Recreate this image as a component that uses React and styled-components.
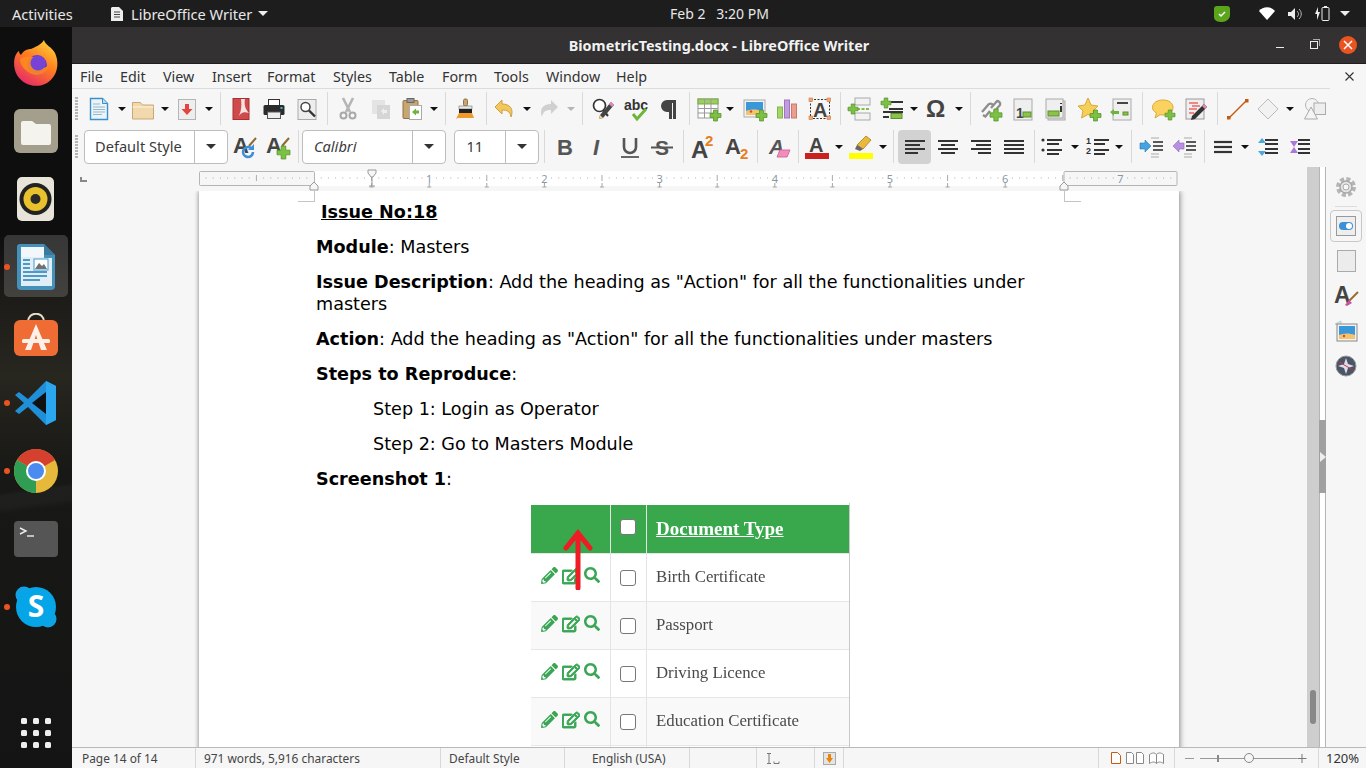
import React from "react";
import styled, { createGlobalStyle } from "styled-components";
import { FaPencilAlt, FaRegEdit, FaSearch } from "react-icons/fa";

const UI = `"Noto Sans", "Open Sans", sans-serif`;

const Global = createGlobalStyle`
  html, body { margin: 0; padding: 0; background: #111; overflow: hidden; }
  * { box-sizing: border-box; }
`;

const Screen = styled.div`
  width: 1366px;
  height: 768px;
  display: flex;
  flex-direction: column;
  overflow: hidden;
  font-family: ${UI};
`;

/* gnome top bar */
const TopBar = styled.div`
  height: 27px;
  background: #1d1d1d;
  color: #e8e8e8;
  font-size: 14.6px;
  display: flex;
  align-items: center;
  position: relative;
`;
const Activities = styled.span`
  margin-left: 12px;
  width: 99px;
`;
const AppMenu = styled.span`
  display: flex;
  align-items: center;
  gap: 8px;
`;
const Caret = styled.span`
  width: 0;
  height: 0;
  border-left: 5px solid transparent;
  border-right: 5px solid transparent;
  border-top: 5px solid #eee;
  margin-left: ${(p) => p.$ml || 0}px;
`;
const Clock = styled.span`
  position: absolute;
  left: 670px;
  font-size: 14px;
  white-space: pre;
`;
const Tray = styled.div`
  margin-left: auto;
  margin-right: 16px;
  display: flex;
  align-items: center;
  gap: 13px;
`;

const Main = styled.div`
  flex: 1;
  display: flex;
  min-height: 0;
`;

/* launcher */
const Dock = styled.div`
  width: 72px;
  padding-top: 2px;
  display: flex;
  flex-direction: column;
  background:
    linear-gradient(172deg, transparent 0 62%, rgba(255, 255, 255, 0.03) 62.5% 64%, transparent 65%),
    linear-gradient(180deg, #0e0e0e 0 28%, #1c1b18 36%, #27261f 47%, #181816 60%, #141414 100%);
`;
const DockCell = styled.div`
  height: 68px;
  display: flex;
  align-items: center;
  justify-content: center;
  position: relative;
`;
const DockHighlight = styled.div`
  position: absolute;
  left: 4px;
  top: 2px;
  width: 64px;
  height: 62px;
  border-radius: 5px;
  background: rgba(255, 255, 255, 0.17);
`;
const RunDot = styled.span`
  position: absolute;
  left: 4px;
  top: 31px;
  width: 6px;
  height: 6px;
  border-radius: 50%;
  background: #e95420;
`;
const AppsGrid = styled.div`
  margin-top: auto;
  margin-bottom: 4px;
  height: 62px;
  display: grid;
  grid-template-columns: repeat(3, 6px);
  grid-auto-rows: 6px;
  gap: 6px;
  justify-content: center;
  align-content: center;
  span {
    background: #eee;
    border-radius: 1.5px;
  }
`;

/* libreoffice window */
const Win = styled.div`
  flex: 1;
  min-width: 0;
  display: flex;
  flex-direction: column;
  background: #f6f6f6;
`;
const TitleBar = styled.div`
  height: 37px;
  background: #333132;
  border-bottom: 1px solid #1f1f1f;
  color: #f2f2f2;
  font-weight: 700;
  font-size: 14.4px;
  display: flex;
  align-items: center;
  justify-content: center;
  position: relative;
`;
const WinButtons = styled.div`
  position: absolute;
  right: 9px;
  top: 9px;
  display: flex;
  align-items: center;
`;
const MinBtn = styled.span`
  width: 8px;
  height: 1px;
  margin-top: 4px;
  margin-right: 26px;
  background: #eee;
`;
const RestoreBtn = styled.span`
  width: 8px;
  height: 8px;
  border: 1px solid #eee;
  margin-right: 21px;
  position: relative;
  &::after {
    content: "";
    position: absolute;
    right: -3px;
    top: -3px;
    width: 6px;
    height: 6px;
    border-top: 1px solid #aaa;
    border-right: 1px solid #aaa;
  }
`;
const CloseBtn = styled.span`
  width: 18px;
  height: 18px;
  border-radius: 50%;
  background: #e95420;
  display: flex;
  align-items: center;
  justify-content: center;
`;

const MenuBar = styled.div`
  height: 25px;
  padding: 0 0 1px 8px;
  display: flex;
  align-items: center;
  font-size: 14.3px;
  color: #333;
  position: relative;
  &::after {
    content: "";
    position: absolute;
    left: 0;
    bottom: 0;
    width: 1258px;
    height: 1px;
    background: #dcdcdc;
  }
`;
const MenuItem = styled.span`
  width: ${(p) => p.$w}px;
  flex: none;
`;
const MenuClose = styled.span`
  margin-left: auto;
  margin-right: 12px;
  display: flex;
`;

const ToolRow = styled.div`
  height: 39px;
  display: flex;
  align-items: center;
  padding-bottom: ${(p) => p.$pb || 0}px;
`;
const Slot = styled.div`
  flex: none;
  display: flex;
  align-items: center;
  justify-content: center;
  width: ${(p) => p.$w}px;
  margin-left: ${(p) => p.$gap}px;
`;
const Grip = styled.div`
  width: 3px;
  height: 23px;
  background: repeating-linear-gradient(180deg, #b4b4b4 0 2px, transparent 2px 3px);
`;
const ToolSep = styled.div`
  width: 1px;
  height: 33px;
  background: #d9d9d9;
`;
const DropArrow = styled.span`
  width: 0;
  height: 0;
  border-left: 4px solid transparent;
  border-right: 4px solid transparent;
  border-top: 4px solid ${(p) => (p.$off ? "#b5b5b5" : "#111")};
`;
const Combo = styled.div`
  width: 100%;
  height: 34px;
  background: #fff;
  border: 1px solid #bdbdbd;
  border-radius: 4px;
  display: flex;
  font-size: 14.6px;
  color: #3a3a3a;
`;
const ComboText = styled.span`
  flex: 1;
  display: flex;
  align-items: center;
  padding-left: ${(p) => p.$pl || 10}px;
  padding-bottom: 2px;
  font-style: ${(p) => (p.$italic ? "italic" : "normal")};
  white-space: nowrap;
`;
const ComboArrow = styled.span`
  width: ${(p) => p.$w || 33}px;
  border-left: 1px solid #bdbdbd;
  display: flex;
  align-items: center;
  justify-content: center;
  &::before {
    content: "";
    border-left: 5px solid transparent;
    border-right: 5px solid transparent;
    border-top: 5px solid #333;
  }
`;
const ActiveTool = styled.div`
  width: 33px;
  height: 34px;
  background: #d2d2d2;
  border-radius: 4px;
  display: flex;
  align-items: center;
  justify-content: center;
`;

/* edit area */
const ContentRow = styled.div`
  flex: 1;
  min-height: 0;
  display: flex;
`;
const EditColumn = styled.div`
  width: 1235px;
  flex: none;
  display: flex;
  flex-direction: column;
  min-height: 0;
`;
const RulerRow = styled.div`
  height: 24px;
  flex: none;
  padding-left: 8px;
  display: flex;
  align-items: flex-start;
`;
const TabCorner = styled.span`
  width: 7px;
  height: 5px;
  margin-top: 10px;
  margin-right: 112px;
  border-left: 2px solid #888;
  border-bottom: 2px solid #888;
`;
const DocArea = styled.div`
  flex: 1;
  min-height: 0;
  overflow: hidden;
  padding-left: 127px;
`;
const Page = styled.div`
  width: 980px;
  height: 600px;
  background: #fff;
  box-shadow: -1px 0 4px rgba(0, 0, 0, 0.28), 2px 0 5px rgba(0, 0, 0, 0.28);
  padding: 10px 0 0 117px;
  position: relative;
  color: #000;
  font-family: "DejaVu Sans", sans-serif;
  font-size: 17.6px;
  line-height: 22px;
`;
const CropMark = styled.span`
  position: absolute;
  top: 0;
  width: 17px;
  height: 11px;
  border-bottom: 1px solid #c4c4c4;
  ${(p) => (p.$side === "left" ? "left: 99px; border-right: 1px solid #c4c4c4;" : "left: 865px; border-left: 1px solid #c4c4c4;")}
`;
const Para = styled.p`
  margin: 0 0 13px ${(p) => p.$indent || 0}px;
  width: 730px;
`;
const IssueTitle = styled.p`
  margin: 0 0 13px 5px;
  font-weight: 700;
  text-decoration: underline;
`;

/* pasted screenshot */
const Shot = styled.div`
  margin: 2px 0 0 214px;
  width: 320px;
  position: relative;
  padding: 2px 0 0 1px;
  border-right: 1px solid #c9c9c9;
  font-family: "Liberation Serif", serif;
  filter: blur(0.3px);
`;
const ShotRow = styled.div`
  display: grid;
  grid-template-columns: 79px 36px 1fr;
  height: ${(p) => (p.$head ? 49 : 48)}px;
  background: ${(p) => (p.$head ? "#39a84c" : p.$alt ? "#f9f9f9" : "#fff")};
  border-bottom: 1px solid ${(p) => (p.$head ? "#e4e4e4" : "#e6e6e6")};
`;
const ShotCell = styled.div`
  display: flex;
  align-items: center;
  padding-left: ${(p) => p.$pl || 0}px;
  padding-right: ${(p) => (p.$center ? 2 : 0)}px;
  justify-content: ${(p) => (p.$center ? "center" : "flex-start")};
  border-left: ${(p) => (p.$first ? "0" : "1.5px solid #e4e4e4")};
  color: #3aa655;
`;
const DocType = styled.span`
  color: #4a4a4a;
  font-size: 16.8px;
  margin-top: -1px;
`;
const DocHead = styled.span`
  color: #fff;
  font-size: 19px;
  font-weight: 700;
  text-decoration: underline;
`;
const ShotCheck = styled.span`
  width: 16px;
  height: 16px;
  border: 1.5px solid #777;
  border-radius: 3px;
  background: #fff;
  margin-top: ${(p) => p.$mt || 0}px;
`;
const ActionIcons = styled.span`
  display: flex;
  gap: 4px;
  margin: -4px 0 0 10px;
`;
const RedArrow = styled.svg`
  position: absolute;
  left: 33px;
  top: 25px;
`;

/* scrollbar + sidebar */
const ScrollTrack = styled.div`
  width: 12px;
  flex: none;
  background: #cecece;
  padding: 523px 3px 0;
`;
const ScrollThumb = styled.div`
  height: 34px;
  border-radius: 3px;
  background: #888;
`;
const SideHandle = styled.div`
  width: 7px;
  flex: none;
  background: #fff;
  border-left: 1px solid #b5b5b5;
  border-right: 1px solid #b5b5b5;
  padding-top: 253px;
`;
const HandleGrip = styled.div`
  height: 73px;
  margin: 0 -1px;
  background: #a0a0a0;
  display: flex;
  align-items: center;
  &::before {
    content: "";
    border-left: 6px solid #eee;
    border-top: 5px solid transparent;
    border-bottom: 5px solid transparent;
    margin-left: 1px;
  }
`;
const SideBar = styled.div`
  flex: 1;
  display: flex;
  flex-direction: column;
  align-items: center;
  padding-top: 8px;
`;
const SideBtn = styled.div`
  width: 32px;
  height: ${(p) => (p.$active ? 32 : 35)}px;
  margin-bottom: ${(p) => (p.$active ? 1 : 0)}px;
  flex: none;
  display: flex;
  align-items: center;
  justify-content: center;
  border: 1px solid ${(p) => (p.$active ? "#c8c8c8" : "transparent")};
  border-radius: 4px;
`;
const SideRule = styled.div`
  width: 22px;
  height: 1px;
  margin-top: 7px;
  margin-bottom: 3px;
  background: #dcdcdc;
`;

/* status bar */
const StatusBar = styled.div`
  height: 21px;
  flex: none;
  border-top: 1px solid #b9b9b9;
  display: flex;
  align-items: center;
  font-size: 11.9px;
  color: #444;
`;
const StatusCell = styled.div`
  flex: none;
  width: ${(p) => p.$w}px;
  height: 100%;
  padding-left: ${(p) => p.$pl || 0}px;
  border-right: ${(p) => (p.$sep ? "1px solid #d8d8d8" : "0")};
  display: flex;
  align-items: center;
  gap: ${(p) => p.$gap || 0}px;
  white-space: nowrap;
`;
const ZoomPercent = styled.span`
  font-size: 13px;
  color: #333;
`;

const Svg = ({ s = 24, children }) => (
  <svg width={s} height={s} viewBox={`0 0 ${s} ${s}`} overflow="visible">
    {children}
  </svg>
);

const Plus = ({ x = 14, y = 14, s = 10, fill = "#7cc142" }) => (
  <path
    d={`M${x + s * 0.32} ${y}h${s * 0.36}v${s * 0.32}h${s * 0.32}v${s * 0.36}h${-s * 0.32}v${s * 0.32}h${-s * 0.36}v${-s * 0.32}h${-s * 0.32}v${-s * 0.36}h${s * 0.32}z`}
    fill={fill}
    stroke="#4f8f25"
    strokeWidth=".7"
  />
);
const Lbl = ({ x, y, size = 20, fill = "#444", style = "normal", weight = 700, family = "Liberation Sans", children }) => (
  <text x={x} y={y} fontSize={size} fill={fill} fontWeight={weight} fontStyle={style} fontFamily={family}>
    {children}
  </text>
);
const Lines = ({ rows, stroke = "#333", sw = 2 }) => (
  <g stroke={stroke} strokeWidth={sw}>
    {rows.map(([x1, x2, y], i) => (
      <line key={i} x1={x1} x2={x2} y1={y} y2={y} />
    ))}
  </g>
);
const Brush = () => <path d="M23 3l-7 8" stroke="#8f6a35" strokeWidth="2" />;

const Ic = {
  New: () => (
    <Svg>
      <path d="M3.5 1.5h12l5 5v16h-17z" fill="#eaf4fb" stroke="#3d8fcb" strokeWidth="1.4" />
      <path d="M15.5 1.5v5h5" fill="#bcdcf2" stroke="#3d8fcb" />
      <Lines rows={[[6, 13, 7], [6, 18, 10], [6, 18, 12.5], [6, 18, 15], [6, 15, 17.5]]} stroke="#9db5c6" sw={1} />
    </Svg>
  ),
  Open: () => (
    <Svg>
      <path d="M1.5 5.5h8l2 2.5h11v14h-21z" fill="#f2d9ad" stroke="#c9a875" />
      <path d="M1.5 10h21" stroke="#fff2da" />
    </Svg>
  ),
  Save: () => (
    <Svg>
      <rect x="3.5" y="2.5" width="17" height="20" fill="#eee" stroke="#b5b5b5" />
      <path d="M10 7h4v5h3.5l-5.500 6-5.500-6H10z" fill="#e2443f" />
    </Svg>
  ),
  Pdf: () => (
    <Svg>
      <rect x="4" y="1.5" width="16" height="21" fill="#cf4a4c" stroke="#a83032" />
      <path d="M8 22c4-6 5-12 4-20h4c-1 5 0 10 4 14-6-2-9 0-12 6z" fill="#f7e3e0" />
    </Svg>
  ),
  Print: () => (
    <Svg>
      <rect x="6.5" y="2.5" width="11" height="7" fill="#fff" stroke="#333" />
      <rect x="1.5" y="8" width="21" height="10" rx="1.5" fill="#2c2c2c" />
      <rect x="18.5" y="10" width="2" height="2" fill="#3ab5e6" />
      <rect x="5.5" y="15" width="13" height="6.5" fill="#eee" stroke="#555" />
    </Svg>
  ),
  Preview: () => (
    <Svg>
      <rect x="3" y="2.5" width="18" height="20" fill="#eee" stroke="#aaa" />
      <circle cx="10.5" cy="10" r="4.5" fill="#fff" stroke="#444" strokeWidth="1.5" />
      <path d="M14 13.5l6 6" stroke="#333" strokeWidth="2.4" />
    </Svg>
  ),
  Cut: () => (
    <Svg>
      <path d="M7 1l7 14M17 1L10 15" stroke="#b5b5b5" strokeWidth="2.6" />
      <circle cx="7.5" cy="18.5" r="3" fill="none" stroke="#a8a8a8" strokeWidth="2" />
      <circle cx="16.5" cy="18.5" r="3" fill="none" stroke="#a8a8a8" strokeWidth="2" />
    </Svg>
  ),
  Copy: () => (
    <Svg>
      <rect x="3" y="3" width="13" height="14" fill="#e4e4e4" />
      <rect x="8" y="8" width="13" height="14" fill="#d6d6d6" />
      <path d="M12 14l3-3v2h3v3h-3v2z" fill="#eee" />
    </Svg>
  ),
  Paste: () => (
    <Svg>
      <rect x="3" y="3.5" width="15" height="18" rx="1" fill="#c9a56f" stroke="#8f7344" />
      <rect x="7" y="1.5" width="7" height="4" fill="#999" stroke="#666" />
      <rect x="9.5" y="8.5" width="12" height="14" fill="#fff" stroke="#aaa" />
      <path d="M12 15l4-3.5v2h3v3h-3v2z" fill="#6cb33f" />
    </Svg>
  ),
  Clone: () => (
    <Svg>
      <rect x="9.5" y="2" width="4" height="7" rx="1.5" fill="#c9a56f" stroke="#8f7344" />
      <rect x="5" y="9" width="13" height="3" fill="#e7e7e7" stroke="#777" strokeWidth=".6" />
      <rect x="5" y="12" width="13" height="4" fill="#222" />
      <path d="M5 16h13l2 5H4l-2 1z" fill="#ef9a2b" />
    </Svg>
  ),
  Undo: () => (
    <Svg>
      <path d="M9 3L2 10l7 7v-4c5 0 8 1 9 7 3-8-1-13-9-13z" fill="#f2c75c" stroke="#cfa03e" />
    </Svg>
  ),
  Redo: () => (
    <Svg>
      <path d="M15 3l7 7-7 7v-4c-5 0-8 1-9 7-3-8 1-13 9-13z" fill="#d0d0d0" />
    </Svg>
  ),
  Find: () => (
    <Svg>
      <circle cx="8.5" cy="8.5" r="6" fill="#fff" stroke="#333" strokeWidth="1.7" />
      <path d="M12 13l5 6" stroke="#333" strokeWidth="2" />
      <path d="M20 5l3 3-11 13-4 1 1-4z" fill="#444" />
      <path d="M20 5l3 3-2 2-3-3z" fill="#e58ab8" />
      <path d="M9 18l3 3-4 1z" fill="#f3d38c" />
    </Svg>
  ),
  Spell: () => (
    <Svg>
      <Lbl x={0} y={13} size={14} fill="#333">abc</Lbl>
      <path d="M9 17l4 5 9-10" fill="none" stroke="#6fb536" strokeWidth="3" />
    </Svg>
  ),
  Para: () => (
    <Svg>
      <path d="M19 3H10a6 6 0 0 0 0 12h2v7h3V6h1v16h3z" fill="#444" />
    </Svg>
  ),
  Table: () => (
    <Svg>
      <rect x="1" y="2" width="20" height="19" fill="#fff" stroke="#999" />
      <rect x="1" y="2" width="20" height="5" fill="#9ccc65" stroke="#7ba847" />
      <path d="M7.5 2v19M14 2v19M1 11.5h20M1 16h20" stroke="#999" />
      <Plus x={13} y={13} s={11} />
    </Svg>
  ),
  Image: () => (
    <Svg>
      <rect x="1" y="3" width="21" height="17" fill="#f2f2f2" stroke="#aaa" />
      <rect x="3" y="5" width="17" height="13" fill="#3b98d8" />
      <path d="M3 18v-4c5-2 10-2 17 0v4z" fill="#f4c36b" />
      <circle cx="8" cy="14.5" r="1.2" fill="#d9482b" />
      <Plus x={13} y={13} s={11} />
    </Svg>
  ),
  Chart: () => (
    <Svg>
      <rect x="2.5" y="10" width="5" height="11" fill="#a6d66a" stroke="#84b24b" />
      <rect x="9.5" y="3" width="5" height="18" fill="#c29be0" stroke="#9c77bd" />
      <rect x="16.5" y="7" width="5" height="14" fill="#ec9d8d" stroke="#c67b6c" />
    </Svg>
  ),
  TextBox: () => (
    <Svg>
      <rect x="2.5" y="2.5" width="19" height="19" fill="none" stroke="#333" strokeDasharray="2 1.5" />
      <Lbl x={5} y={20} size={20} fill="#444">A</Lbl>
      {[[1, 1], [19, 1], [1, 19], [19, 19]].map(([x, y]) => (
        <rect key={x + "" + y} x={x} y={y} width="3.6" height="3.6" fill="#f0a878" stroke="#c97741" strokeWidth=".6" />
      ))}
    </Svg>
  ),
  PageBreak: () => (
    <Svg>
      <rect x="7" y="1" width="15" height="7" fill="#f2f2f2" stroke="#aaa" />
      <rect x="7" y="16" width="15" height="7" fill="#f2f2f2" stroke="#aaa" />
      <path d="M9 12h13" stroke="#7cc142" strokeWidth="2" strokeDasharray="3 1.5" />
      <Plus x={0} y={7} s={10} />
    </Svg>
  ),
  Field: () => (
    <Svg>
      <Lines rows={[[8, 22, 5], [8, 22, 12], [2, 22, 15], [2, 8, 20]]} sw={2} />
      <Plus x={0} y={1} s={10} />
      <rect x="10" y="16.5" width="11" height="5" fill="#8bc34a" stroke="#5d8f2c" />
    </Svg>
  ),
  Omega: () => (
    <Svg>
      <Lbl x={1} y={20} size={24} fill="#444">Ω</Lbl>
    </Svg>
  ),
  Link: () => (
    <Svg>
      <path d="M4 15l6-7a3 3 0 0 1 5 0M8 20l-3-2M12 14l-5 6M13 11l6-7a3 3 0 0 1 3 4l-6 7" fill="none" stroke="#8d8d8d" strokeWidth="2.3" />
      <Plus x={12} y={12} s={12} />
    </Svg>
  ),
  Footnote: () => (
    <Svg>
      <rect x="3" y="2" width="18" height="21" fill="#efefef" stroke="#aaa" />
      <Lbl x={5} y={21} size={14} fill="#444">1</Lbl>
      <rect x="12" y="15" width="8" height="5" fill="#8bc34a" stroke="#5d8f2c" />
    </Svg>
  ),
  Endnote: () => (
    <Svg>
      <rect x="5" y="4" width="17" height="19" fill="#ddd" stroke="#aaa" />
      <rect x="3" y="2" width="17" height="19" fill="#efefef" stroke="#aaa" />
      <path d="M18 6v1M18 9v6" stroke="#333" strokeWidth="2" />
      <rect x="5" y="14" width="11" height="5" fill="#8bc34a" stroke="#5d8f2c" />
    </Svg>
  ),
  Star: () => (
    <Svg>
      <path d="M11 1l3 7 7 1-5 5 1.500 7-6.500-3.500L4.500 21 6 14 1 9l7-1z" fill="#f6cf57" stroke="#d9a93a" />
      <Plus x={13} y={13} s={11} />
    </Svg>
  ),
  XRef: () => (
    <Svg>
      <rect x="4" y="2" width="18" height="21" fill="#efefef" stroke="#aaa" />
      <path d="M8 6h11" stroke="#444" strokeWidth="2" />
      <path d="M1 15l4-3v2h5v3H5v2z" fill="#6cb33f" />
      <rect x="14" y="15" width="5" height="3" fill="#8bc34a" stroke="#5d8f2c" />
    </Svg>
  ),
  Comment: () => (
    <Svg>
      <path d="M12 3c6 0 10 3 10 7.500S18 18 12 18c-1 0-2 0-3-.3L4 21l1.500-5C3 14.500 1.500 13 1.500 10.500 1.500 6 6 3 12 3z" fill="#fbd25f" stroke="#d9a93a" />
      <Plus x={14} y={13} s={10} />
    </Svg>
  ),
  Track: () => (
    <Svg>
      <rect x="2" y="2" width="18" height="20" fill="#eee" stroke="#999" />
      <Lines rows={[[5, 14, 6], [8, 16, 9], [5, 13, 12], [5, 10, 16]]} stroke="#e22" sw={1} />
      <path d="M20 7l3 3-12 12-4 1 1-4z" fill="#333" />
      <path d="M20 7l3 3-2 2-3-3z" fill="#e58ab8" />
    </Svg>
  ),
  Line: () => (
    <Svg>
      <path d="M3 21L20 4" stroke="#c55a11" strokeWidth="1.4" />
      <rect x="1" y="19" width="3.5" height="3.5" fill="#c55a11" />
      <rect x="19" y="2" width="3.5" height="3.5" fill="#c55a11" />
    </Svg>
  ),
  Diamond: () => (
    <Svg>
      <path d="M12 2l10 10-10 10L2 12z" fill="#f2f2f2" stroke="#bbb" />
    </Svg>
  ),
  Shapes: () => (
    <Svg>
      <circle cx="9" cy="8" r="6.5" fill="#f4f4f4" stroke="#b5b5b5" />
      <rect x="11" y="6" width="11.5" height="11.5" fill="#eee" stroke="#aaa" />
      <path d="M8 10l6.500 12H1.500z" fill="#f4f4f4" stroke="#aaa" />
    </Svg>
  ),
  AUpdate: () => (
    <Svg>
      <Lbl x={0} y={18} size={22} fill="#444">A</Lbl>
      <Brush />
      <path d="M20 17a5 5 0 1 1-2-4" fill="none" stroke="#3d8fd8" strokeWidth="2.6" />
      <path d="M21 9v6h-6z" fill="#3d8fd8" />
    </Svg>
  ),
  ANew: () => (
    <Svg>
      <Lbl x={0} y={18} size={22} fill="#444">A</Lbl>
      <Brush />
      <Plus x={11} y={11} s={13} />
    </Svg>
  ),
  Bold: () => <Svg><Lbl x={5} y={20} size={22} fill="#555">B</Lbl></Svg>,
  Italic: () => <Svg><Lbl x={8} y={20} size={22} fill="#555" style="italic">I</Lbl></Svg>,
  Under: () => (
    <Svg>
      <path d="M6 3v9a6 6 0 0 0 12 0V3" fill="none" stroke="#555" strokeWidth="2.6" />
      <path d="M3 22h18" stroke="#666" strokeWidth="2" />
    </Svg>
  ),
  Strike: () => (
    <Svg>
      <Lbl x={5} y={20} size={21} fill="#555">S</Lbl>
      <path d="M1 12.5h22" stroke="#555" strokeWidth="2" />
    </Svg>
  ),
  Sup: () => (
    <Svg>
      <Lbl x={0} y={23} size={24} fill="#444">A</Lbl>
      <Lbl x={14} y={11} size={15} fill="#e67e22">2</Lbl>
    </Svg>
  ),
  Sub: () => (
    <Svg>
      <Lbl x={0} y={19} size={22} fill="#444">A</Lbl>
      <Lbl x={15} y={24} size={15} fill="#e67e22">2</Lbl>
    </Svg>
  ),
  Clear: () => (
    <Svg>
      <Lbl x={2} y={19} size={21} fill="#555" style="italic">A</Lbl>
      <path d="M13 15h10l-3 7H10z" fill="#f28dbb" stroke="#d26c9a" />
    </Svg>
  ),
  Color: () => (
    <Svg>
      <Lbl x={4} y={17} size={20} fill="#444">A</Lbl>
      <rect x="0" y="18" width="24" height="6" fill="#c9211e" />
    </Svg>
  ),
  Mark: () => (
    <Svg>
      <path d="M17 1l5 4-8 9-6-4z" fill="#e8b83f" stroke="#b98f28" />
      <path d="M8 10l6 4-3 2-5-2z" fill="#666" />
      <rect x="0" y="18" width="24" height="6" fill="#ffff00" />
    </Svg>
  ),
  AlignL: () => <Svg><Lines rows={[[2, 22, 6], [2, 17, 10], [2, 22, 14], [2, 15, 18]]} /></Svg>,
  AlignC: () => <Svg><Lines rows={[[2, 22, 6], [5, 19, 10], [2, 22, 14], [5, 19, 18]]} /></Svg>,
  AlignR: () => <Svg><Lines rows={[[2, 22, 6], [7, 22, 10], [2, 22, 14], [9, 22, 18]]} /></Svg>,
  Just: () => <Svg><Lines rows={[[2, 22, 6], [2, 22, 10], [2, 22, 14], [2, 22, 18]]} /></Svg>,
  Bullets: () => (
    <Svg>
      <Lines rows={[[7, 22, 5], [7, 19, 9], [7, 22, 15], [7, 19, 19]]} />
      <circle cx="3" cy="5" r="1.6" fill="#333" />
      <circle cx="3" cy="15" r="1.6" fill="#333" />
    </Svg>
  ),
  Numbers: () => (
    <Svg>
      <Lines rows={[[9, 24, 5], [9, 20, 9], [9, 24, 15], [9, 20, 19]]} />
      <Lbl x={1} y={9} size={9} fill="#333">1</Lbl>
      <Lbl x={1} y={19} size={9} fill="#333">2</Lbl>
    </Svg>
  ),
  Indent: ({ flip }) => (
    <Svg>
      <Lines rows={[[14, 24, 7], [14, 24, 11], [14, 24, 15]]} sw={1.6} />
      <Lines rows={[[12, 20, 3], [12, 20, 19], [12, 20, 22]]} stroke="#aaa" sw={1} />
      {flip ? (
        <path d="M1 11l6-6v3h5v6H7v3z" fill="#b88fe2" stroke="#8f68b8" strokeWidth=".6" />
      ) : (
        <path d="M12 11l-6-6v3H1v6h5v3z" fill="#46a3e0" stroke="#2a78b0" strokeWidth=".6" />
      )}
    </Svg>
  ),
  Spacing: () => <Svg><Lines rows={[[3, 21, 7], [3, 21, 12], [3, 21, 17]]} sw={2.2} /></Svg>,
  SpaceUp: () => (
    <Svg>
      <Lines rows={[[9, 22, 5], [9, 22, 9], [9, 22, 14], [9, 22, 18]]} />
      <path d="M6 3l4 5H2zM6 21l4-5H2z" fill="#4fa8dc" />
    </Svg>
  ),
  SpaceDown: () => (
    <Svg>
      <Lines rows={[[10, 22, 5], [10, 22, 9], [10, 22, 14], [10, 22, 18]]} />
      <path d="M2 6h8L6 12l4 6H2l4-6z" fill="#ab78d8" />
    </Svg>
  ),
};

// [centre x on screen, width, node]
const sep = (c) => [c, 1, <ToolSep />];
const dd = (c, off) => [c, 8, <DropArrow $off={off} />];
const ic = (c, Comp, w = 24) => [c, w, <Comp />];

const row1 = [
  [76.5, 3, <Grip />],
  ic(99, Ic.New), dd(122), ic(143, Ic.Open), dd(165), ic(187, Ic.Save), dd(209), sep(220),
  ic(241, Ic.Pdf), ic(274, Ic.Print), ic(307, Ic.Preview), sep(327),
  ic(348, Ic.Cut), ic(381, Ic.Copy), ic(412, Ic.Paste), dd(434), sep(445),
  ic(466, Ic.Clone), sep(486),
  ic(505, Ic.Undo), dd(527), ic(548, Ic.Redo), dd(571, true), sep(582),
  ic(603, Ic.Find), ic(636, Ic.Spell), ic(669, Ic.Para), sep(689),
  ic(709, Ic.Table), dd(730), ic(755, Ic.Image), ic(787, Ic.Chart), ic(820, Ic.TextBox), sep(840),
  ic(860, Ic.PageBreak), ic(893, Ic.Field), dd(914), ic(937, Ic.Omega), dd(959), sep(970),
  ic(990, Ic.Link), ic(1023, Ic.Footnote), ic(1055, Ic.Endnote), ic(1089, Ic.Star), ic(1121, Ic.XRef), sep(1142),
  ic(1163, Ic.Comment), ic(1196, Ic.Track), sep(1217),
  ic(1238, Ic.Line), ic(1268, Ic.Diamond), dd(1290), ic(1315, Ic.Shapes),
];

const row2 = [
  [76.5, 3, <Grip />],
  [156, 144, <Combo><ComboText>Default Style</ComboText><ComboArrow /></Combo>],
  ic(245, Ic.AUpdate), ic(278, Ic.ANew), sep(298),
  [374, 144, <Combo><ComboText $italic $pl={11}>Calibri</ComboText><ComboArrow /></Combo>],
  [496, 85, <Combo><ComboText $pl={12}>11</ComboText><ComboArrow /></Combo>],
  sep(544),
  ic(564, Ic.Bold), ic(597, Ic.Italic), ic(630, Ic.Under), ic(662, Ic.Strike), sep(683),
  ic(703, Ic.Sup), ic(737, Ic.Sub), sep(757), ic(779, Ic.Clear), sep(798),
  ic(817, Ic.Color), dd(839), ic(861, Ic.Mark), dd(883), sep(893),
  [914.5, 33, <ActiveTool><Ic.AlignL /></ActiveTool>],
  ic(948, Ic.AlignC), ic(981, Ic.AlignR), ic(1014, Ic.Just), sep(1034),
  ic(1052, Ic.Bullets), dd(1075), ic(1097, Ic.Numbers), dd(1119), sep(1131),
  ic(1151, Ic.Indent), [1184, 24, <Ic.Indent flip />], sep(1204),
  ic(1223, Ic.Spacing), dd(1245), ic(1268, Ic.SpaceUp), ic(1300, Ic.SpaceDown),
];

const Tools = ({ items }) => {
  let right = 72;
  return items.map(([c, w, node], i) => {
    const left = c - w / 2;
    const gap = left - right;
    right = left + w;
    return (
      <Slot key={i} $w={w} $gap={gap}>
        {node}
      </Slot>
    );
  });
};

const menus = [
  ["File", 40], ["Edit", 43], ["View", 49], ["Insert", 55], ["Format", 66], ["Styles", 56],
  ["Table", 53], ["Form", 52], ["Tools", 52], ["Window", 70], ["Help", 40],
];

const Ruler = () => {
  const inch = 115.2;
  const zero = 115;
  const marks = [];
  for (let i = -16; i < 120; i++) {
    const x = zero + (i * inch) / 16;
    if (x < 4 || x > 974) continue;
    const n = ((i % 16) + 16) % 16;
    if (n === 0) continue;
    const big = n === 8;
    marks.push(<line key={i} x1={x} x2={x} y1={big ? 8 : 10.5} y2={big ? 14 : 11.5} stroke="#aaa" />);
  }
  const tabs = [];
  for (let i = 1; i < 14; i++) tabs.push(zero + i * inch / 2);
  const nums = [1, 2, 3, 4, 5, 6, 7];
  return (
    <svg width="980" height="24" viewBox="0 0 980 24">
      <rect x="115" y="4" width="750" height="15" fill="#fff" />
      <rect x="0.5" y="4.5" width="115" height="14" fill="#f6f6f6" stroke="#b5b5b5" rx="1" />
      <rect x="865" y="4.5" width="113" height="14" fill="#f6f6f6" stroke="#b5b5b5" rx="1" />
      {marks}
      {tabs.map((x) => (
        <path key={x} d={`M${x} 16v4M${x - 2} 20h4`} stroke="#a5a5a5" fill="none" />
      ))}
      {nums.map((n) => (
        <text key={n} x={zero + n * inch} y="16" textAnchor="middle" fontSize="11" fontFamily="Noto Sans, sans-serif" fill="#8a97a5">
          {n}
        </text>
      ))}
      <path d="M169 3h8v3l-3 4h-2l-3-4zM173 10v9M170 19h6" fill="#f6f6f6" stroke="#999" />
      <path d="M115 15l4 4v4h-8v-4z" fill="#f6f6f6" stroke="#999" />
      <path d="M865 15l4 4v4h-8v-4z" fill="#f6f6f6" stroke="#999" />
    </svg>
  );
};

const Firefox = () => (
  <svg width="46" height="48" viewBox="0 0 46 48">
    <defs>
      <linearGradient id="ffa" x1="0.8" y1="0" x2="0.2" y2="1">
        <stop offset="0" stopColor="#ffd23a" />
        <stop offset=".45" stopColor="#ff7b1f" />
        <stop offset="1" stopColor="#e5246f" />
      </linearGradient>
    </defs>
    <path d="M31 1c1 5 8 7 11 13 5 11 2 24-8 30-11 6-24 2-30-8C-1 27 1 15 6 12c0 2 1 3 2 4 2-4 6-6 10-6 4-2 10-4 13-9z" fill="url(#ffa)" />
    <circle cx="24" cy="26" r="10" fill="#6a3ec8" />
    <path d="M7 20c5-3 11-3 15-1 4 1 8 0 10 2-1 5-6 6-9 5 3 4 9 4 13 0-2 8-10 12-17 9-7-3-12-9-12-15z" fill="#ff8a1e" opacity=".9" />
    <circle cx="25" cy="24" r="7.5" fill="#7543d6" />
  </svg>
);
const FilesIcon = () => (
  <svg width="44" height="44" viewBox="0 0 44 44">
    <rect width="44" height="44" rx="6" fill="#a49e8d" />
    <path d="M7 14a2 2 0 0 1 2-2h9l4 3h13a2 2 0 0 1 2 2v17a2 2 0 0 1-2 2H9a2 2 0 0 1-2-2z" fill="#f5f3ee" />
  </svg>
);
const Rhythm = () => (
  <svg width="38" height="44" viewBox="0 0 38 44">
    <rect width="37" height="44" rx="5" fill="#e8e4d9" />
    <circle cx="18.5" cy="22" r="16" fill="#222" />
    <circle cx="18.5" cy="22" r="12" fill="#e8c12c" />
    <circle cx="18.5" cy="22" r="5" fill="#2a2a2a" />
  </svg>
);
const Writer = () => (
  <svg width="38" height="46" viewBox="0 0 38 46">
    <path d="M3 0h24l11 11v31a4 4 0 0 1-4 4H4a4 4 0 0 1-4-4V3a3 3 0 0 1 3-3z" fill="#1f7bab" />
    <path d="M4 3h23v11h8v28H4z" fill="#dcebf5" />
    <path d="M4 3h23v10H4z" fill="#eef6fb" />
    <path d="M27 0l11 11H27z" fill="#15608a" />
    <path d="M6 16h7M6 20h7M6 24h7M6 28h24M6 32h24M6 36h17" stroke="#2a86bb" strokeWidth="2" />
    <rect x="17" y="15" width="14" height="11" fill="#fff" stroke="#2a86bb" />
    <path d="M18 25l4-6 3 3 2-2 3 5z" fill="#555" />
  </svg>
);
const Store = () => (
  <svg width="46" height="44" viewBox="0 0 46 44">
    <path d="M15 9c0-11 16-11 16 0" fill="none" stroke="#e8dcc8" strokeWidth="2" />
    <rect x="1" y="7" width="44" height="36" rx="6" fill="#ef6c35" />
    <path d="M23 11l-11 26h6l5-15 5 15h6z" fill="#fdf0e8" />
    <rect x="9" y="26" width="28" height="4" rx="1.5" fill="#fdf0e8" />
  </svg>
);
const VSCode = () => (
  <svg width="44" height="44" viewBox="0 0 44 44">
    <path d="M32 0l10 5v34l-10 5-18-18L5 33l-4-3 9-8-9-8 4-3 9 7z" fill="#1f8fd8" />
    <path d="M32 0l10 5v34l-10 5z" fill="#2aa7ee" />
    <path d="M32 11v22L18 22z" fill="#111" />
  </svg>
);
const Chrome = () => (
  <svg width="44" height="44" viewBox="0 0 44 44">
    <circle cx="22" cy="22" r="22" fill="#e7b93a" />
    <path d="M22 22L3 11A22 22 0 0 1 41 11z" fill="#d6402f" />
    <path d="M22 22L3 11A22 22 0 0 0 22 44z" fill="#2f9e54" />
    <circle cx="22" cy="22" r="10" fill="#fff" />
    <circle cx="22" cy="22" r="8" fill="#4b8bf0" />
  </svg>
);
const Terminal = () => (
  <svg width="44" height="36" viewBox="0 0 44 36">
    <rect width="44" height="36" rx="4" fill="#555" />
    <path d="M6 7l6 3-6 3" fill="none" stroke="#eee" strokeWidth="1.4" />
    <path d="M13 15h7" stroke="#eee" strokeWidth="1.4" />
  </svg>
);
const Skype = () => (
  <svg width="42" height="42" viewBox="0 0 42 42">
    <circle cx="9" cy="9" r="8.5" fill="#0fa3e4" />
    <circle cx="33" cy="33" r="8.5" fill="#0fa3e4" />
    <circle cx="21" cy="21" r="20" fill="#06a5e8" />
    <text x="21" y="31" textAnchor="middle" fontSize="30" fontWeight="700" fontFamily="Noto Sans, sans-serif" fill="#fff">S</text>
  </svg>
);

const apps = [
  { icon: <Firefox /> },
  { icon: <FilesIcon /> },
  { icon: <Rhythm /> },
  { icon: <Writer />, active: true, dot: true },
  { icon: <Store /> },
  { icon: <VSCode />, dot: true },
  { icon: <Chrome />, dot: true },
  { icon: <Terminal /> },
  { icon: <Skype />, dot: true },
];

const docs = ["Birth Certificate", "Passport", "Driving Licence", "Education Certificate"];

export default function App() {
  return (
    <Screen>
      <Global />
      <TopBar>
        <Activities>Activities</Activities>
        <AppMenu>
          <svg width="12" height="14" viewBox="0 0 12 14">
            <path d="M1 0h7l4 4v10H0V1z" fill="#eee" />
            <path d="M3 5h6M3 7.5h6M3 10h6" stroke="#444" />
          </svg>
          LibreOffice Writer
          <Caret $ml={-2} />
        </AppMenu>
        <Clock>Feb 2   3:20 PM</Clock>
        <Tray>
          <svg width="16" height="16" viewBox="0 0 16 16" style={{ marginRight: 16 }}>
            <path d="M3 0h10a3 3 0 0 1 3 3v6c0 4-4 7-8 7s-8-1-8-5V3a3 3 0 0 1 3-3z" fill="#5ba51c" />
            <path d="M5 8l2 2 4-4" stroke="#fff" strokeWidth="1.5" fill="none" />
          </svg>
          <svg width="16" height="13" viewBox="0 0 16 13">
            <path d="M0 4c4-5 12-5 16 0l-8 9z" fill="#fff" />
          </svg>
          <svg width="14" height="12" viewBox="0 0 14 12">
            <path d="M0 4h3l4-4v12L3 8H0z" fill="#eee" />
            <path d="M9 3c2 2 2 4 0 6M11 1c3 3 3 7 0 10" stroke="#bbb" fill="none" />
          </svg>
          <svg width="15" height="15" viewBox="0 0 15 15">
            <path d="M3 1L0 8h2v6l3-8H3z" fill="#eee" />
            <rect x="7" y="1.5" width="7" height="13" rx="1" fill="none" stroke="#eee" />
            <rect x="9" y="0" width="3" height="1.5" fill="#eee" />
          </svg>
          <Caret $ml={-3} />
        </Tray>
      </TopBar>
      <Main>
        <Dock>
          {apps.map((a, i) => (
            <DockCell key={i}>
              {a.active && <DockHighlight />}
              {a.dot && <RunDot />}
              {a.icon}
            </DockCell>
          ))}
          <AppsGrid>
            {Array.from({ length: 9 }, (_, i) => (
              <span key={i} />
            ))}
          </AppsGrid>
        </Dock>
        <Win>
          <TitleBar>
            BiometricTesting.docx - LibreOffice Writer
            <WinButtons>
              <MinBtn />
              <RestoreBtn />
              <CloseBtn>
                <svg width="10" height="10" viewBox="0 0 10 10">
                  <path d="M1 1l8 8M9 1L1 9" stroke="#fff" strokeWidth="1.5" />
                </svg>
              </CloseBtn>
            </WinButtons>
          </TitleBar>
          <MenuBar>
            {menus.map(([m, w]) => (
              <MenuItem key={m} $w={w}>
                {m}
              </MenuItem>
            ))}
            <MenuClose>
              <svg width="9" height="9" viewBox="0 0 9 9">
                <path d="M.5.5l8 8M8.500.5l-8 8" stroke="#333" strokeWidth="1.1" />
              </svg>
            </MenuClose>
          </MenuBar>
          <ToolRow>
            <Tools items={row1} />
          </ToolRow>
          <ToolRow $pb={2}>
            <Tools items={row2} />
          </ToolRow>
          <ContentRow>
            <EditColumn>
              <RulerRow>
                <TabCorner />
                <Ruler />
              </RulerRow>
              <DocArea>
                <Page>
                  <CropMark $side="left" />
                  <CropMark $side="right" />
                  <IssueTitle>Issue No:18</IssueTitle>
                  <Para><b>Module</b>: Masters</Para>
                  <Para><b>Issue Description</b>: Add the heading as "Action" for all the functionalities under masters</Para>
                  <Para><b>Action</b>: Add the heading as "Action" for all the functionalities under masters</Para>
                  <Para><b>Steps to Reproduce</b>:</Para>
                  <Para $indent={57}>Step 1: Login as Operator</Para>
                  <Para $indent={57}>Step 2: Go to Masters Module</Para>
                  <Para><b>Screenshot 1</b>:</Para>
                  <Shot>
                    <ShotRow $head>
                      <ShotCell $first />
                      <ShotCell $center><ShotCheck $mt={-4} /></ShotCell>
                      <ShotCell $pl={9}><DocHead>Document Type</DocHead></ShotCell>
                    </ShotRow>
                    {docs.map((d, i) => (
                      <ShotRow key={d} $alt={i % 2 === 1}>
                        <ShotCell $first>
                          <ActionIcons>
                            <FaPencilAlt size={17} />
                            <FaRegEdit size={18} stroke="currentColor" strokeWidth={30} />
                            <FaSearch size={16} />
                          </ActionIcons>
                        </ShotCell>
                        <ShotCell $center><ShotCheck /></ShotCell>
                        <ShotCell $pl={9}><DocType>{d}</DocType></ShotCell>
                      </ShotRow>
                    ))}
                    <ShotRow>
                      <ShotCell $first />
                      <ShotCell />
                      <ShotCell />
                    </ShotRow>
                    <RedArrow width="30" height="62" viewBox="0 0 30 62">
                      <path d="M15 60V6M3 20L15 5l12 15" fill="none" stroke="#ee1c25" strokeWidth="5" strokeLinecap="round" />
                    </RedArrow>
                  </Shot>
                </Page>
              </DocArea>
            </EditColumn>
            <ScrollTrack><ScrollThumb /></ScrollTrack>
            <SideHandle><HandleGrip /></SideHandle>
            <SideBar>
              <svg width="24" height="24" viewBox="0 0 24 24">
                <circle cx="12" cy="12" r="8" fill="none" stroke="#b5b5b5" strokeWidth="4" strokeDasharray="4 2.3" />
                <circle cx="12" cy="12" r="6" fill="#e4e4e4" stroke="#a8a8a8" strokeWidth="1.5" />
                <circle cx="12" cy="12" r="3" fill="#f6f6f6" stroke="#a8a8a8" />
              </svg>
              <SideRule />
              <SideBtn $active>
                <svg width="20" height="20" viewBox="0 0 20 20">
                  <rect x=".5" y=".5" width="19" height="19" fill="#eee" stroke="#999" />
                  <rect x="3" y="6" width="14" height="8" rx="4" fill="#3d8fd8" />
                  <circle cx="13" cy="10" r="3" fill="#fff" />
                </svg>
              </SideBtn>
              <SideBtn>
                <svg width="19" height="22" viewBox="0 0 19 22">
                  <rect x=".5" y=".5" width="18" height="21" fill="#ececec" stroke="#aaa" />
                </svg>
              </SideBtn>
              <SideBtn>
                <Svg>
                  <Lbl x={0} y={19} size={23} fill="#444">A</Lbl>
                  <path d="M24 8l-9 9" stroke="#9a6b30" strokeWidth="2" />
                  <path d="M15 16l3 3-5 3-2-1z" fill="#c653a8" />
                </Svg>
              </SideBtn>
              <SideBtn>
                <svg width="24" height="22" viewBox="0 0 24 22">
                  <path d="M1 4l6-3v4z" fill="#dfe7ef" stroke="#9bb" strokeWidth=".6" />
                  <rect x="3" y="4" width="20" height="17" fill="#f2f2f2" stroke="#888" />
                  <rect x="5" y="6" width="16" height="13" fill="#3b98d8" />
                  <path d="M5 19v-4c5-2 10-2 16 0v4z" fill="#f4c36b" />
                  <circle cx="10" cy="16" r="1.2" fill="#d9482b" />
                </svg>
              </SideBtn>
              <SideBtn>
                <svg width="22" height="22" viewBox="0 0 22 22">
                  <circle cx="11" cy="11" r="10" fill="#4a5566" stroke="#999" />
                  <path d="M11 3l2 6 6 2-6 2-2 6-2-6-6-2 6-2z" fill="#dde" />
                  <path d="M4 7l14 8" stroke="#c33" />
                </svg>
              </SideBtn>
            </SideBar>
          </ContentRow>
          <StatusBar>
            <StatusCell $w={124} $pl={10} $sep>Page 14 of 14</StatusCell>
            <StatusCell $w={245} $pl={8} $sep>971 words, 5,916 characters</StatusCell>
            <StatusCell $w={124} $pl={8} $sep>Default Style</StatusCell>
            <StatusCell $w={125} $pl={27} $sep>English (USA)</StatusCell>
            <StatusCell $w={67} $sep />
            <StatusCell $w={58} $pl={9} $sep>
              <svg width="14" height="11" viewBox="0 0 14 11">
                <path d="M1 .5h4M3 .5v10M1 10.5h4M8 10.5h5M8 8.5v2M13 8.5v2" stroke="#777" fill="none" />
              </svg>
            </StatusCell>
            <StatusCell $w={29} $pl={8} $sep>
              <svg width="13" height="13" viewBox="0 0 13 13">
                <rect x=".5" y=".5" width="12" height="12" fill="#e4e4e4" stroke="#aaa" />
                <path d="M5 2h3v4h2l-3.500 5L3 6h2z" fill="#e8850c" />
              </svg>
            </StatusCell>
            <StatusCell $w={255} $sep />
            <StatusCell $w={76} $pl={12} $gap={6} $sep>
              <svg width="54" height="12" viewBox="0 0 54 12">
                <path d="M.5.5h6l3 3v8h-9z" fill="#fff" stroke="#c55a11" />
                <path d="M15.5.5h5l2 2v9h-7zM25.5.5h5l2 2v9h-7z" fill="#fff" stroke="#888" />
                <path d="M38.5 2.5c3-2 5-2 7 0 2-2 4-2 7 0v9c-3-2-5-2-7 0-2-2-4-2-7 0zM45.5 2.5v9" fill="#fff" stroke="#888" />
              </svg>
            </StatusCell>
            <StatusCell $w={144} $pl={10} $sep>
              <svg width="122" height="14" viewBox="0 0 122 14">
                <path d="M0 7.5h9M15 7.5h97" stroke="#999" />
                <path d="M33 4v7" stroke="#888" strokeWidth="2" />
                <circle cx="64" cy="7" r="4.5" fill="#f6f6f6" stroke="#888" />
                <path d="M117 3v9M112.500 7.500h9" stroke="#777" />
              </svg>
            </StatusCell>
            <StatusCell $w={47} $pl={7}><ZoomPercent>120%</ZoomPercent></StatusCell>
          </StatusBar>
        </Win>
      </Main>
    </Screen>
  );
}
